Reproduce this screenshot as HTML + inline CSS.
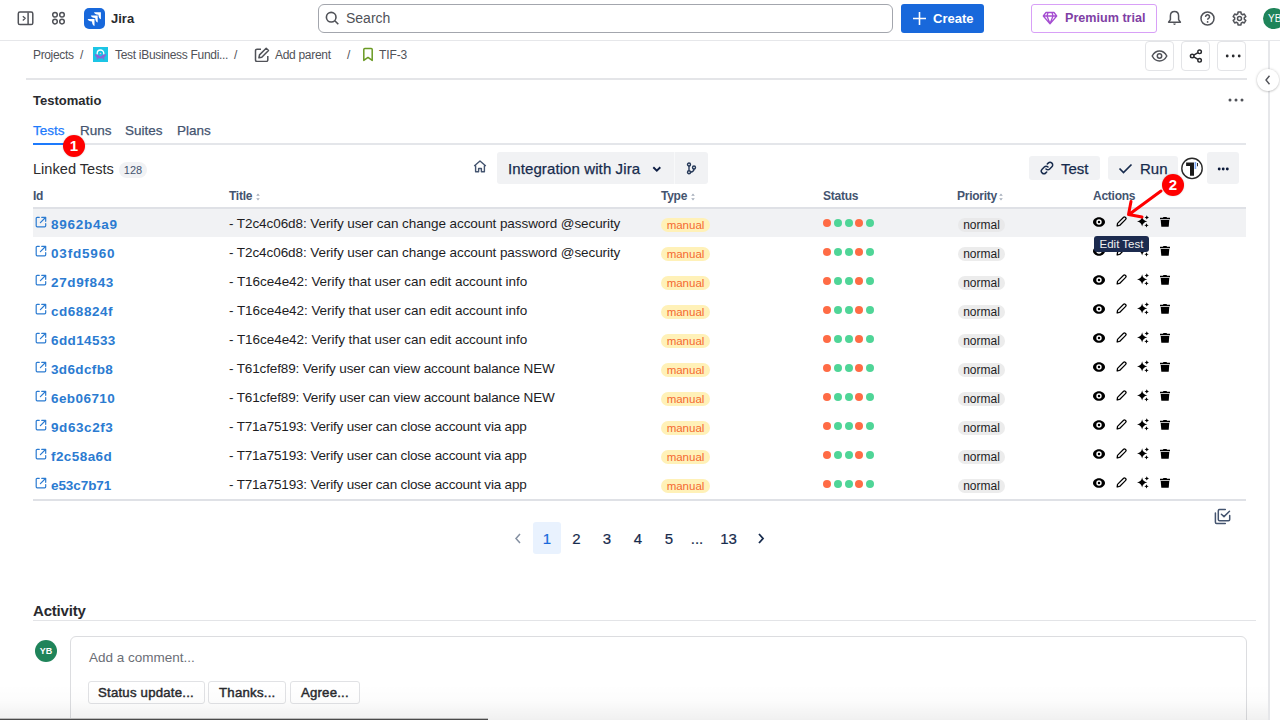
<!DOCTYPE html>
<html><head><meta charset="utf-8">
<style>
*{box-sizing:border-box;margin:0;padding:0}
html,body{width:1280px;height:720px;overflow:hidden;background:#fff;font-family:"Liberation Sans",sans-serif;color:#172b4d}
.a{position:absolute}
.hdr{position:absolute;left:0;top:0;width:1280px;height:41px;border-bottom:1px solid #e6e7ea}
.search{left:318px;top:3.5px;width:575px;height:29px;border:1px solid #a3a6ad;border-radius:6px}
.create{left:901px;top:3.5px;width:82.5px;height:29px;background:#1868db;border-radius:3px;color:#fff;font-weight:bold;font-size:14px}
.prem{left:1031px;top:3.5px;width:125.5px;height:29px;border:1px solid #d8a0f7;border-radius:3px;color:#803fa5;font-weight:bold;font-size:14px}
.bc{font-size:12px;color:#505258;letter-spacing:-0.1px}
.ibox{border:1px solid #e3e4e7;border-radius:4px;width:29px;height:30px;top:41px}
.row{position:absolute;left:33px;width:1213px;height:29px}
.idl{position:absolute;left:18px;font-weight:bold;font-size:13.5px;letter-spacing:.5px;color:#2b7bd1}
.ttl{position:absolute;left:196px;font-size:13.5px;letter-spacing:-0.1px;color:#1d1d1f}
.man{position:absolute;left:628px;width:49px;height:14px;border-radius:7px;background:#fff1b8;color:#f4692f;font-size:11.5px;text-align:center;line-height:14px}
.dots{position:absolute;left:790px;top:11px}
.dots i{position:absolute;top:0;width:8px;height:8px;border-radius:4px}
.nor{position:absolute;left:925px;width:47px;height:14px;border-radius:7px;background:#ececec;color:#1d1d1f;font-size:12px;text-align:center;line-height:14px}
.th{position:absolute;top:189px;font-size:12px;font-weight:bold;color:#44546f;letter-spacing:-0.25px}
</style></head><body>
<div class="hdr"></div>
<!-- top bar icons -->
<svg class="a" style="left:17px;top:11px" width="17" height="16" viewBox="0 0 17 16"><rect x="1.3" y="1.1" width="14.5" height="12.4" rx="1.6" fill="none" stroke="#505258" stroke-width="1.5"/><line x1="11.1" y1="1.5" x2="11.1" y2="13" stroke="#505258" stroke-width="1.5"/><path d="M5.8 5.2l2.4 2.1-2.4 2.1" fill="none" stroke="#505258" stroke-width="1.3" stroke-linejoin="round"/></svg>
<svg class="a" style="left:51px;top:11px" width="16" height="15" viewBox="0 0 16 15"><g fill="none" stroke="#505258" stroke-width="1.5"><circle cx="4" cy="3.8" r="2.3"/><circle cx="11" cy="3.8" r="2.3"/><circle cx="4" cy="10.6" r="2.3"/><circle cx="11" cy="10.6" r="2.3"/></g></svg>
<div class="a" style="left:84px;top:8px;width:21px;height:21px;background:#1868db;border-radius:5px"></div>
<svg class="a" style="left:84px;top:8px" width="21" height="21" viewBox="0 0 21 21"><g fill="#fff"><path d="M10 4.2H16.9V11.2Q14.6 10.6 14.4 6.8Q10.6 6.6 10 4.2Z"/><path d="M6.8 7.5H13.7V14.5Q11.4 13.9 11.2 10.1Q7.4 9.9 6.8 7.5Z"/><path d="M3.6 11H10.5V18Q8.2 17.4 8 13.6Q4.2 13.4 3.6 11Z"/></g></svg>
<div class="a" style="left:111px;top:11px;font-size:13px;font-weight:bold;color:#292a2e">Jira</div>
<div class="a search"></div>
<svg class="a" style="left:325px;top:11px" width="15" height="15" viewBox="0 0 15 15"><circle cx="6.2" cy="6.2" r="4.8" fill="none" stroke="#505258" stroke-width="1.6"/><path d="M9.8 9.8l3.5 3.5" stroke="#505258" stroke-width="1.6"/></svg>
<div class="a" style="left:346px;top:10px;font-size:14px;color:#505258">Search</div>
<div class="a create"></div>
<svg class="a" style="left:912px;top:11px" width="15" height="15" viewBox="0 0 15 15"><path d="M7.5 1v13M1 7.5h13" stroke="#fff" stroke-width="1.6"/></svg>
<div class="a" style="left:933px;top:11px;font-size:13px;font-weight:bold;color:#fff">Create</div>
<div class="a prem"></div>
<svg class="a" style="left:1042px;top:11px" width="16" height="14" viewBox="0 0 16 14"><path d="M4 1.5h8l2.7 3.5L8 12.8 1.3 5z M1.3 5h13.4 M6 1.5L5 5l3 7.8 3-7.8-1-3.5" fill="none" stroke="#a54ed1" stroke-width="1.3" stroke-linejoin="round"/></svg>
<div class="a" style="left:1065px;top:11px;font-size:12.6px;font-weight:bold;color:#803fa5">Premium trial</div>
<svg class="a" style="left:1167px;top:10px" width="15" height="16" viewBox="0 0 15 16"><path d="M7.5 1.6c-2.5 0-4.1 1.9-4.1 4.4v3.6L1.6 12.2h11.8L11.6 9.6V6c0-2.5-1.6-4.4-4.1-4.4z" fill="none" stroke="#505258" stroke-width="1.5" stroke-linejoin="round"/><path d="M6.2 13.6a1.3 1.3 0 002.6 0z" fill="#505258"/></svg>
<svg class="a" style="left:1199.5px;top:10.5px" width="15" height="15" viewBox="0 0 15 15"><circle cx="7.5" cy="7.5" r="6.5" fill="none" stroke="#505258" stroke-width="1.5"/><path d="M5.6 5.9a1.95 1.95 0 113.8.5c-.3.8-1.7 1-1.7 2.3" fill="none" stroke="#505258" stroke-width="1.5"/><circle cx="7.6" cy="10.9" r=".9" fill="#505258"/></svg>
<svg class="a" style="left:1232px;top:10.5px" width="15" height="15" viewBox="0 0 15 15"><path d="M6.02 1.07 L8.98 1.07 L9.18 2.90 L10.65 3.75 L12.33 3.00 L13.81 5.57 L12.33 6.65 L12.33 8.35 L13.81 9.43 L12.33 12.00 L10.65 11.25 L9.18 12.10 L8.98 13.93 L6.02 13.93 L5.82 12.10 L4.35 11.25 L2.67 12.00 L1.19 9.43 L2.67 8.35 L2.67 6.65 L1.19 5.57 L2.67 3.00 L4.35 3.75 L5.82 2.90Z" fill="none" stroke="#505258" stroke-width="1.5" stroke-linejoin="round"/><circle cx="7.5" cy="7.5" r="2" fill="none" stroke="#505258" stroke-width="1.5"/></svg>
<div class="a" style="left:1263px;top:8px;width:22px;height:21px;border-radius:11px;background:#1f845a;color:#fff;font-size:10px;line-height:21px;padding-left:5px">YB</div>

<!-- breadcrumbs -->
<div class="a bc" style="left:33px;top:48px;letter-spacing:-0.35px">Projects</div>
<div class="a bc" style="left:80px;top:48px">/</div>
<svg class="a" style="left:92.5px;top:47px" width="15" height="15" viewBox="0 0 15 15"><rect width="15" height="15" fill="#1cc5e5"/><path d="M4.2 7.5V6.3a3.3 3.3 0 016.6 0v1.2" fill="none" stroke="#fff" stroke-width="1.3"/><path d="M1.8 7Q7.5 9.3 13.2 7Q12.8 11.2 7.5 11.6Q2.2 11.2 1.8 7Z" fill="#8d63d6"/><path d="M4.3 11v1.4M10.7 11v1.4" stroke="#8d63d6" stroke-width="1.2"/><rect x="6" y="4.3" width="3" height="5" rx="1" fill="#17c3e4"/><circle cx="7.5" cy="6.5" r=".8" fill="#f4a9d9"/></svg>
<div class="a bc" style="left:115px;top:48px;letter-spacing:-0.3px">Test iBusiness Fundi...</div>
<div class="a bc" style="left:234px;top:48px">/</div>
<svg class="a" style="left:254px;top:47px" width="16" height="15" viewBox="0 0 16 15"><path d="M7 2.2H3a1.5 1.5 0 00-1.5 1.5v9.3A1.5 1.5 0 003 14.5h9.3a1.5 1.5 0 001.5-1.5V9" fill="none" stroke="#505258" stroke-width="1.5"/><path d="M12.2 1.2l2.3 2.3-6.7 6.7-2.9.6.6-2.9z" fill="none" stroke="#505258" stroke-width="1.5" stroke-linejoin="round"/></svg>
<div class="a bc" style="left:275px;top:48px;letter-spacing:-0.3px">Add parent</div>
<div class="a bc" style="left:347px;top:48px">/</div>
<svg class="a" style="left:362px;top:47px" width="12" height="15" viewBox="0 0 12 15"><path d="M2.8 1.5H9.2Q10.2 1.5 10.2 2.5V13.4L6 10.4 1.8 13.4V2.5Q1.8 1.5 2.8 1.5Z" fill="none" stroke="#6a9a23" stroke-width="1.5" stroke-linejoin="round"/></svg>
<div class="a bc" style="left:379px;top:48px">TIF-3</div>
<div class="a ibox" style="left:1145px"></div>
<div class="a ibox" style="left:1181px"></div>
<div class="a ibox" style="left:1217px"></div>
<svg class="a" style="left:1151px;top:49px" width="17" height="14" viewBox="0 0 17 14"><path d="M1.2 7C3 3.6 5.5 2 8.5 2s5.5 1.6 7.3 5c-1.8 3.4-4.3 5-7.3 5S3 10.4 1.2 7z" fill="none" stroke="#505258" stroke-width="1.5"/><circle cx="8.5" cy="7" r="2.2" fill="none" stroke="#505258" stroke-width="1.5"/></svg>
<svg class="a" style="left:1188px;top:48px" width="16" height="16" viewBox="0 0 16 16"><g fill="none" stroke="#292a2e" stroke-width="1.45"><circle cx="11.6" cy="3.8" r="1.8"/><circle cx="4.2" cy="8" r="1.8"/><circle cx="11.6" cy="12.3" r="1.8"/><path d="M5.8 7.1l4.2-2.4M5.8 8.9l4.2 2.4"/></g></svg>
<svg class="a" style="left:1224px;top:54px" width="18" height="4" viewBox="0 0 18 4"><circle cx="3.2" cy="2" r="1.4" fill="#292a2e"/><circle cx="9.2" cy="2" r="1.4" fill="#292a2e"/><circle cx="15.2" cy="2" r="1.4" fill="#292a2e"/></svg>

<!-- panel -->
<div class="a" style="left:26px;top:78px;width:1221px;height:2px;background:#e4e5e8"></div>
<div class="a" style="left:1268px;top:41px;width:2px;height:679px;background:#e6e7ea"></div>
<div class="a" style="left:1257px;top:69px;width:22px;height:22px;border-radius:11px;background:#fff;box-shadow:0 0 3px rgba(0,0,0,.18),0 1px 2px rgba(0,0,0,.12)"></div>
<svg class="a" style="left:1263px;top:74px" width="10" height="12" viewBox="0 0 10 12"><path d="M6.5 1.8L3 6l3.5 4.2" fill="none" stroke="#505258" stroke-width="1.4"/></svg>

<div class="a" style="left:33px;top:93px;font-size:13px;font-weight:bold;color:#292a2e">Testomatio</div>
<svg class="a" style="left:1228px;top:98px" width="16" height="4" viewBox="0 0 16 4"><circle cx="2" cy="2" r="1.5" fill="#505258"/><circle cx="8" cy="2" r="1.5" fill="#505258"/><circle cx="14" cy="2" r="1.5" fill="#505258"/></svg>

<div class="a" style="left:33px;top:143px;width:1213px;height:2px;background:#e4e6ea"></div>
<div class="a" style="left:33px;top:143px;width:33px;height:2px;background:#1d7afc"></div>
<div class="a" style="left:33px;top:123px;font-size:13.5px;color:#1d7afc;-webkit-text-stroke:.25px #1d7afc">Tests</div>
<div class="a" style="left:80px;top:123px;font-size:13.5px;color:#44546f;-webkit-text-stroke:.25px #44546f">Runs</div>
<div class="a" style="left:125px;top:123px;font-size:13.5px;color:#44546f;-webkit-text-stroke:.25px #44546f">Suites</div>
<div class="a" style="left:177px;top:123px;font-size:13.5px;color:#44546f;-webkit-text-stroke:.25px #44546f">Plans</div>

<div class="a" style="left:33px;top:161px;font-size:14.6px;color:#2c2c2e">Linked Tests</div>
<div class="a" style="left:119px;top:162px;width:28px;height:16px;border-radius:8px;background:#f1f2f4;color:#44546f;font-size:11px;text-align:center;line-height:16px">128</div>


<svg class="a" style="left:473px;top:160px" width="14" height="13" viewBox="0 0 14 13"><path d="M1.2 6L7 1l5.8 5 M2.6 4.8v7h3V8.5h2.8v3.3h3V4.8" fill="none" stroke="#44546f" stroke-width="1.4" stroke-linejoin="round"/></svg>
<div class="a" style="left:497px;top:152px;width:211px;height:32px;background:#f1f2f4;border-radius:3px"></div>
<div class="a" style="left:674px;top:152px;width:1px;height:32px;background:#f8f9fa"></div>
<div class="a" style="left:508px;top:160px;font-size:15px;color:#172b4d;letter-spacing:.1px;-webkit-text-stroke:.25px #172b4d">Integration with Jira</div>
<svg class="a" style="left:652px;top:166px" width="10" height="7" viewBox="0 0 10 7"><path d="M1.3 1.2L4.8 4.6 8.3 1.2" fill="none" stroke="#0f1f45" stroke-width="1.9"/></svg>
<svg class="a" style="left:686px;top:162px" width="11" height="13" viewBox="0 0 11 13"><g fill="none" stroke="#253858" stroke-width="1.4"><circle cx="3" cy="2.5" r="1.5"/><circle cx="3" cy="10.2" r="1.5"/><circle cx="8" cy="5.5" r="1.5"/><path d="M3 4v4.7 M8 7Q8 9.6 4.5 10.2"/></g></svg>
<div class="a" style="left:1029px;top:156px;width:71px;height:24px;background:#f1f2f4;border-radius:3px"></div>
<svg class="a" style="left:1040px;top:161px" width="14" height="14" viewBox="0 0 14 14"><g fill="none" stroke="#172b4d" stroke-width="1.5" stroke-linecap="round"><path d="M6 8a2.6 2.6 0 003.7 0l2.2-2.2a2.6 2.6 0 00-3.7-3.7L7.3 3"/><path d="M8 6a2.6 2.6 0 00-3.7 0L2.1 8.2a2.6 2.6 0 003.7 3.7l.9-.9"/></g></svg>
<div class="a" style="left:1061px;top:160px;font-size:15px;color:#172b4d;-webkit-text-stroke:.25px #172b4d">Test</div>
<div class="a" style="left:1108px;top:156px;width:70px;height:24px;background:#f1f2f4;border-radius:3px"></div>
<svg class="a" style="left:1118px;top:163px" width="15" height="11" viewBox="0 0 15 11"><path d="M1.5 5.5l4 4 8-8" fill="none" stroke="#172b4d" stroke-width="1.7"/></svg>
<div class="a" style="left:1140px;top:160px;font-size:15px;color:#172b4d;-webkit-text-stroke:.25px #172b4d">Run</div>
<svg class="a" style="left:1180px;top:157px" width="24" height="24" viewBox="0 0 24 24"><circle cx="12" cy="11.4" r="10.2" fill="#fff" stroke="#2a2a2a" stroke-width="1.4"/><path d="M6.1 5.5H14V18.8H10V9H6.1Z" fill="#1a1a1a"/><path d="M14.6 5H16.2V12H14.6Z" fill="#7ba8f7"/><path d="M17 6H18V9.2H17Z" fill="#333"/></svg>
<div class="a" style="left:1207px;top:152px;width:32px;height:32px;background:#f1f2f4;border-radius:3px"></div>
<svg class="a" style="left:1217px;top:167px" width="12" height="4" viewBox="0 0 12 4"><circle cx="2.2" cy="2" r="1.45" fill="#0c1a3a"/><circle cx="6.2" cy="2" r="1.45" fill="#0c1a3a"/><circle cx="10.3" cy="2" r="1.45" fill="#0c1a3a"/></svg>

<div class="th" style="left:33px">Id</div>
<div class="th" style="left:229px">Title</div>
<div class="th" style="left:661px">Type</div>
<div class="th" style="left:823px">Status</div>
<div class="th" style="left:957px">Priority</div>
<div class="th" style="left:1093px">Actions</div>
<svg class="a" style="left:256px;top:193px" width="4" height="8" viewBox="0 0 4 8"><path d="M2 0.5L3.8 2.8H0.2z M2 7.5L0.2 5.2h3.6z" fill="#a5adba"/></svg>
<svg class="a" style="left:691px;top:193px" width="4" height="8" viewBox="0 0 4 8"><path d="M2 0.5L3.8 2.8H0.2z M2 7.5L0.2 5.2h3.6z" fill="#a5adba"/></svg>
<svg class="a" style="left:999px;top:193px" width="4" height="8" viewBox="0 0 4 8"><path d="M2 0.5L3.8 2.8H0.2z M2 7.5L0.2 5.2h3.6z" fill="#a5adba"/></svg>
<div class="a" style="left:33px;top:207px;width:1213px;height:2px;background:#dfe1e6"></div>
<div class="a" style="left:33px;top:209px;width:1213px;height:28px;background:#f1f2f4"></div>
<div class="row" style="top:208px">
<svg class="a" style="left:2px;top:8px" width="12" height="12" viewBox="0 0 12 12"><path d="M4.3 1.3H2.2Q1.2 1.3 1.2 2.3V9.8Q1.2 10.8 2.2 10.8H9.7Q10.7 10.8 10.7 9.8V7.6" fill="none" stroke="#2b7bd1" stroke-width="1.2" stroke-linecap="round" stroke-linejoin="round"/><path d="M6.7 1.3h4v4 M10.5 1.5L5.4 6.6" fill="none" stroke="#2b7bd1" stroke-width="1.2" stroke-linecap="round" stroke-linejoin="round"/></svg>
<div class="idl" style="top:9px;letter-spacing:0.750px">8962b4a9</div>
<div class="ttl" style="top:8px;letter-spacing:-0.079px">- T2c4c06d8: Verify user can change account password @security</div>
<div class="man" style="top:10px">manual</div>
<div class="dots"><i style="left:0px;background:#ff6b45"></i><i style="left:11px;background:#4fd597"></i><i style="left:22px;background:#4fd597"></i><i style="left:32px;background:#ff6b45"></i><i style="left:43px;background:#4fd597"></i></div>
<div class="nor" style="top:10px;background:#e9e9ea">normal</div>
</div>
<svg class="a" style="left:1093px;top:216.5px" width="12" height="10" viewBox="0 0 12 10"><path d="M6 0.2C2.6 0.2 0 2.6 0 5S2.6 9.8 6 9.8 12 7.4 12 5 9.4 0.2 6 0.2Z" fill="#000"/><circle cx="6" cy="5" r="2.7" fill="#fff"/><circle cx="6" cy="5" r="1.25" fill="#000"/></svg>
<svg class="a" style="left:1116px;top:216.2px" width="11" height="11" viewBox="0 0 11 11"><path d="M1.2 9.8L1.5 7.4L7.6 1.3Q8.4 0.5 9.2 1.3L9.7 1.8Q10.5 2.6 9.7 3.4L3.6 9.5Z" fill="none" stroke="#000" stroke-width="1.25" stroke-linejoin="round"/><path d="M0.8 10.2L1.2 7.8L3.2 9.8Z" fill="#000"/></svg>
<svg class="a" style="left:1137px;top:215px" width="13" height="13" viewBox="0 -1.5 13 13"><path d="M5.1 -0.2Q5.6 4.2 10.3 4.9Q5.6 5.6 5.1 10Q4.6 5.6 -0.1 4.9Q4.6 4.2 5.1 -0.2Z" fill="#000"/><path d="M9.8 -1.2Q10.1 0.6 12 0.9Q10.1 1.2 9.8 3Q9.5 1.2 7.6 0.9Q9.5 0.6 9.8 -1.2Z" fill="#000"/><path d="M9.5 6.7Q9.8 8.5 11.7 8.8Q9.8 9.1 9.5 10.9Q9.2 9.1 7.3 8.8Q9.2 8.5 9.5 6.7Z" fill="#000"/></svg>
<svg class="a" style="left:1160px;top:216.5px" width="10" height="10" viewBox="0 0 10 10"><path d="M3.4 0H6.6L7 0.8H10V2.2H0V0.8H3Z" fill="#000"/><path d="M0.7 2.9H9.3L8.7 9.7H1.3Z" fill="#000"/></svg>
<div class="row" style="top:237px">
<svg class="a" style="left:2px;top:8px" width="12" height="12" viewBox="0 0 12 12"><path d="M4.3 1.3H2.2Q1.2 1.3 1.2 2.3V9.8Q1.2 10.8 2.2 10.8H9.7Q10.7 10.8 10.7 9.8V7.6" fill="none" stroke="#2b7bd1" stroke-width="1.2" stroke-linecap="round" stroke-linejoin="round"/><path d="M6.7 1.3h4v4 M10.5 1.5L5.4 6.6" fill="none" stroke="#2b7bd1" stroke-width="1.2" stroke-linecap="round" stroke-linejoin="round"/></svg>
<div class="idl" style="top:9px;letter-spacing:0.821px">03fd5960</div>
<div class="ttl" style="top:8px;letter-spacing:-0.079px">- T2c4c06d8: Verify user can change account password @security</div>
<div class="man" style="top:10px">manual</div>
<div class="dots"><i style="left:0px;background:#ff6b45"></i><i style="left:11px;background:#4fd597"></i><i style="left:22px;background:#4fd597"></i><i style="left:32px;background:#ff6b45"></i><i style="left:43px;background:#4fd597"></i></div>
<div class="nor" style="top:10px;background:#ececec">normal</div>
</div>
<svg class="a" style="left:1093px;top:245.5px" width="12" height="10" viewBox="0 0 12 10"><path d="M6 0.2C2.6 0.2 0 2.6 0 5S2.6 9.8 6 9.8 12 7.4 12 5 9.4 0.2 6 0.2Z" fill="#000"/><circle cx="6" cy="5" r="2.7" fill="#fff"/><circle cx="6" cy="5" r="1.25" fill="#000"/></svg>
<svg class="a" style="left:1116px;top:245.2px" width="11" height="11" viewBox="0 0 11 11"><path d="M1.2 9.8L1.5 7.4L7.6 1.3Q8.4 0.5 9.2 1.3L9.7 1.8Q10.5 2.6 9.7 3.4L3.6 9.5Z" fill="none" stroke="#000" stroke-width="1.25" stroke-linejoin="round"/><path d="M0.8 10.2L1.2 7.8L3.2 9.8Z" fill="#000"/></svg>
<svg class="a" style="left:1137px;top:244px" width="13" height="13" viewBox="0 -1.5 13 13"><path d="M5.1 -0.2Q5.6 4.2 10.3 4.9Q5.6 5.6 5.1 10Q4.6 5.6 -0.1 4.9Q4.6 4.2 5.1 -0.2Z" fill="#000"/><path d="M9.8 -1.2Q10.1 0.6 12 0.9Q10.1 1.2 9.8 3Q9.5 1.2 7.6 0.9Q9.5 0.6 9.8 -1.2Z" fill="#000"/><path d="M9.5 6.7Q9.8 8.5 11.7 8.8Q9.8 9.1 9.5 10.9Q9.2 9.1 7.3 8.8Q9.2 8.5 9.5 6.7Z" fill="#000"/></svg>
<svg class="a" style="left:1160px;top:245.5px" width="10" height="10" viewBox="0 0 10 10"><path d="M3.4 0H6.6L7 0.8H10V2.2H0V0.8H3Z" fill="#000"/><path d="M0.7 2.9H9.3L8.7 9.7H1.3Z" fill="#000"/></svg>
<div class="row" style="top:266px">
<svg class="a" style="left:2px;top:8px" width="12" height="12" viewBox="0 0 12 12"><path d="M4.3 1.3H2.2Q1.2 1.3 1.2 2.3V9.8Q1.2 10.8 2.2 10.8H9.7Q10.7 10.8 10.7 9.8V7.6" fill="none" stroke="#2b7bd1" stroke-width="1.2" stroke-linecap="round" stroke-linejoin="round"/><path d="M6.7 1.3h4v4 M10.5 1.5L5.4 6.6" fill="none" stroke="#2b7bd1" stroke-width="1.2" stroke-linecap="round" stroke-linejoin="round"/></svg>
<div class="idl" style="top:9px;letter-spacing:0.643px">27d9f843</div>
<div class="ttl" style="top:8px;letter-spacing:-0.050px">- T16ce4e42: Verify that user can edit account info</div>
<div class="man" style="top:10px">manual</div>
<div class="dots"><i style="left:0px;background:#ff6b45"></i><i style="left:11px;background:#4fd597"></i><i style="left:22px;background:#4fd597"></i><i style="left:32px;background:#ff6b45"></i><i style="left:43px;background:#4fd597"></i></div>
<div class="nor" style="top:10px;background:#ececec">normal</div>
</div>
<svg class="a" style="left:1093px;top:274.5px" width="12" height="10" viewBox="0 0 12 10"><path d="M6 0.2C2.6 0.2 0 2.6 0 5S2.6 9.8 6 9.8 12 7.4 12 5 9.4 0.2 6 0.2Z" fill="#000"/><circle cx="6" cy="5" r="2.7" fill="#fff"/><circle cx="6" cy="5" r="1.25" fill="#000"/></svg>
<svg class="a" style="left:1116px;top:274.2px" width="11" height="11" viewBox="0 0 11 11"><path d="M1.2 9.8L1.5 7.4L7.6 1.3Q8.4 0.5 9.2 1.3L9.7 1.8Q10.5 2.6 9.7 3.4L3.6 9.5Z" fill="none" stroke="#000" stroke-width="1.25" stroke-linejoin="round"/><path d="M0.8 10.2L1.2 7.8L3.2 9.8Z" fill="#000"/></svg>
<svg class="a" style="left:1137px;top:273px" width="13" height="13" viewBox="0 -1.5 13 13"><path d="M5.1 -0.2Q5.6 4.2 10.3 4.9Q5.6 5.6 5.1 10Q4.6 5.6 -0.1 4.9Q4.6 4.2 5.1 -0.2Z" fill="#000"/><path d="M9.8 -1.2Q10.1 0.6 12 0.9Q10.1 1.2 9.8 3Q9.5 1.2 7.6 0.9Q9.5 0.6 9.8 -1.2Z" fill="#000"/><path d="M9.5 6.7Q9.8 8.5 11.7 8.8Q9.8 9.1 9.5 10.9Q9.2 9.1 7.3 8.8Q9.2 8.5 9.5 6.7Z" fill="#000"/></svg>
<svg class="a" style="left:1160px;top:274.5px" width="10" height="10" viewBox="0 0 10 10"><path d="M3.4 0H6.6L7 0.8H10V2.2H0V0.8H3Z" fill="#000"/><path d="M0.7 2.9H9.3L8.7 9.7H1.3Z" fill="#000"/></svg>
<div class="row" style="top:295px">
<svg class="a" style="left:2px;top:8px" width="12" height="12" viewBox="0 0 12 12"><path d="M4.3 1.3H2.2Q1.2 1.3 1.2 2.3V9.8Q1.2 10.8 2.2 10.8H9.7Q10.7 10.8 10.7 9.8V7.6" fill="none" stroke="#2b7bd1" stroke-width="1.2" stroke-linecap="round" stroke-linejoin="round"/><path d="M6.7 1.3h4v4 M10.5 1.5L5.4 6.6" fill="none" stroke="#2b7bd1" stroke-width="1.2" stroke-linecap="round" stroke-linejoin="round"/></svg>
<div class="idl" style="top:9px;letter-spacing:0.536px">cd68824f</div>
<div class="ttl" style="top:8px;letter-spacing:-0.050px">- T16ce4e42: Verify that user can edit account info</div>
<div class="man" style="top:10px">manual</div>
<div class="dots"><i style="left:0px;background:#ff6b45"></i><i style="left:11px;background:#4fd597"></i><i style="left:22px;background:#4fd597"></i><i style="left:32px;background:#ff6b45"></i><i style="left:43px;background:#4fd597"></i></div>
<div class="nor" style="top:10px;background:#ececec">normal</div>
</div>
<svg class="a" style="left:1093px;top:303.5px" width="12" height="10" viewBox="0 0 12 10"><path d="M6 0.2C2.6 0.2 0 2.6 0 5S2.6 9.8 6 9.8 12 7.4 12 5 9.4 0.2 6 0.2Z" fill="#000"/><circle cx="6" cy="5" r="2.7" fill="#fff"/><circle cx="6" cy="5" r="1.25" fill="#000"/></svg>
<svg class="a" style="left:1116px;top:303.2px" width="11" height="11" viewBox="0 0 11 11"><path d="M1.2 9.8L1.5 7.4L7.6 1.3Q8.4 0.5 9.2 1.3L9.7 1.8Q10.5 2.6 9.7 3.4L3.6 9.5Z" fill="none" stroke="#000" stroke-width="1.25" stroke-linejoin="round"/><path d="M0.8 10.2L1.2 7.8L3.2 9.8Z" fill="#000"/></svg>
<svg class="a" style="left:1137px;top:302px" width="13" height="13" viewBox="0 -1.5 13 13"><path d="M5.1 -0.2Q5.6 4.2 10.3 4.9Q5.6 5.6 5.1 10Q4.6 5.6 -0.1 4.9Q4.6 4.2 5.1 -0.2Z" fill="#000"/><path d="M9.8 -1.2Q10.1 0.6 12 0.9Q10.1 1.2 9.8 3Q9.5 1.2 7.6 0.9Q9.5 0.6 9.8 -1.2Z" fill="#000"/><path d="M9.5 6.7Q9.8 8.5 11.7 8.8Q9.8 9.1 9.5 10.9Q9.2 9.1 7.3 8.8Q9.2 8.5 9.5 6.7Z" fill="#000"/></svg>
<svg class="a" style="left:1160px;top:303.5px" width="10" height="10" viewBox="0 0 10 10"><path d="M3.4 0H6.6L7 0.8H10V2.2H0V0.8H3Z" fill="#000"/><path d="M0.7 2.9H9.3L8.7 9.7H1.3Z" fill="#000"/></svg>
<div class="row" style="top:324px">
<svg class="a" style="left:2px;top:8px" width="12" height="12" viewBox="0 0 12 12"><path d="M4.3 1.3H2.2Q1.2 1.3 1.2 2.3V9.8Q1.2 10.8 2.2 10.8H9.7Q10.7 10.8 10.7 9.8V7.6" fill="none" stroke="#2b7bd1" stroke-width="1.2" stroke-linecap="round" stroke-linejoin="round"/><path d="M6.7 1.3h4v4 M10.5 1.5L5.4 6.6" fill="none" stroke="#2b7bd1" stroke-width="1.2" stroke-linecap="round" stroke-linejoin="round"/></svg>
<div class="idl" style="top:9px;letter-spacing:0.393px">6dd14533</div>
<div class="ttl" style="top:8px;letter-spacing:-0.050px">- T16ce4e42: Verify that user can edit account info</div>
<div class="man" style="top:10px">manual</div>
<div class="dots"><i style="left:0px;background:#ff6b45"></i><i style="left:11px;background:#4fd597"></i><i style="left:22px;background:#4fd597"></i><i style="left:32px;background:#ff6b45"></i><i style="left:43px;background:#4fd597"></i></div>
<div class="nor" style="top:10px;background:#ececec">normal</div>
</div>
<svg class="a" style="left:1093px;top:332.5px" width="12" height="10" viewBox="0 0 12 10"><path d="M6 0.2C2.6 0.2 0 2.6 0 5S2.6 9.8 6 9.8 12 7.4 12 5 9.4 0.2 6 0.2Z" fill="#000"/><circle cx="6" cy="5" r="2.7" fill="#fff"/><circle cx="6" cy="5" r="1.25" fill="#000"/></svg>
<svg class="a" style="left:1116px;top:332.2px" width="11" height="11" viewBox="0 0 11 11"><path d="M1.2 9.8L1.5 7.4L7.6 1.3Q8.4 0.5 9.2 1.3L9.7 1.8Q10.5 2.6 9.7 3.4L3.6 9.5Z" fill="none" stroke="#000" stroke-width="1.25" stroke-linejoin="round"/><path d="M0.8 10.2L1.2 7.8L3.2 9.8Z" fill="#000"/></svg>
<svg class="a" style="left:1137px;top:331px" width="13" height="13" viewBox="0 -1.5 13 13"><path d="M5.1 -0.2Q5.6 4.2 10.3 4.9Q5.6 5.6 5.1 10Q4.6 5.6 -0.1 4.9Q4.6 4.2 5.1 -0.2Z" fill="#000"/><path d="M9.8 -1.2Q10.1 0.6 12 0.9Q10.1 1.2 9.8 3Q9.5 1.2 7.6 0.9Q9.5 0.6 9.8 -1.2Z" fill="#000"/><path d="M9.5 6.7Q9.8 8.5 11.7 8.8Q9.8 9.1 9.5 10.9Q9.2 9.1 7.3 8.8Q9.2 8.5 9.5 6.7Z" fill="#000"/></svg>
<svg class="a" style="left:1160px;top:332.5px" width="10" height="10" viewBox="0 0 10 10"><path d="M3.4 0H6.6L7 0.8H10V2.2H0V0.8H3Z" fill="#000"/><path d="M0.7 2.9H9.3L8.7 9.7H1.3Z" fill="#000"/></svg>
<div class="row" style="top:353px">
<svg class="a" style="left:2px;top:8px" width="12" height="12" viewBox="0 0 12 12"><path d="M4.3 1.3H2.2Q1.2 1.3 1.2 2.3V9.8Q1.2 10.8 2.2 10.8H9.7Q10.7 10.8 10.7 9.8V7.6" fill="none" stroke="#2b7bd1" stroke-width="1.2" stroke-linecap="round" stroke-linejoin="round"/><path d="M6.7 1.3h4v4 M10.5 1.5L5.4 6.6" fill="none" stroke="#2b7bd1" stroke-width="1.2" stroke-linecap="round" stroke-linejoin="round"/></svg>
<div class="idl" style="top:9px;letter-spacing:0.357px">3d6dcfb8</div>
<div class="ttl" style="top:8px;letter-spacing:-0.138px">- T61cfef89: Verify user can view account balance NEW</div>
<div class="man" style="top:10px">manual</div>
<div class="dots"><i style="left:0px;background:#ff6b45"></i><i style="left:11px;background:#4fd597"></i><i style="left:22px;background:#4fd597"></i><i style="left:32px;background:#ff6b45"></i><i style="left:43px;background:#4fd597"></i></div>
<div class="nor" style="top:10px;background:#ececec">normal</div>
</div>
<svg class="a" style="left:1093px;top:361.5px" width="12" height="10" viewBox="0 0 12 10"><path d="M6 0.2C2.6 0.2 0 2.6 0 5S2.6 9.8 6 9.8 12 7.4 12 5 9.4 0.2 6 0.2Z" fill="#000"/><circle cx="6" cy="5" r="2.7" fill="#fff"/><circle cx="6" cy="5" r="1.25" fill="#000"/></svg>
<svg class="a" style="left:1116px;top:361.2px" width="11" height="11" viewBox="0 0 11 11"><path d="M1.2 9.8L1.5 7.4L7.6 1.3Q8.4 0.5 9.2 1.3L9.7 1.8Q10.5 2.6 9.7 3.4L3.6 9.5Z" fill="none" stroke="#000" stroke-width="1.25" stroke-linejoin="round"/><path d="M0.8 10.2L1.2 7.8L3.2 9.8Z" fill="#000"/></svg>
<svg class="a" style="left:1137px;top:360px" width="13" height="13" viewBox="0 -1.5 13 13"><path d="M5.1 -0.2Q5.6 4.2 10.3 4.9Q5.6 5.6 5.1 10Q4.6 5.6 -0.1 4.9Q4.6 4.2 5.1 -0.2Z" fill="#000"/><path d="M9.8 -1.2Q10.1 0.6 12 0.9Q10.1 1.2 9.8 3Q9.5 1.2 7.6 0.9Q9.5 0.6 9.8 -1.2Z" fill="#000"/><path d="M9.5 6.7Q9.8 8.5 11.7 8.8Q9.8 9.1 9.5 10.9Q9.2 9.1 7.3 8.8Q9.2 8.5 9.5 6.7Z" fill="#000"/></svg>
<svg class="a" style="left:1160px;top:361.5px" width="10" height="10" viewBox="0 0 10 10"><path d="M3.4 0H6.6L7 0.8H10V2.2H0V0.8H3Z" fill="#000"/><path d="M0.7 2.9H9.3L8.7 9.7H1.3Z" fill="#000"/></svg>
<div class="row" style="top:382px">
<svg class="a" style="left:2px;top:8px" width="12" height="12" viewBox="0 0 12 12"><path d="M4.3 1.3H2.2Q1.2 1.3 1.2 2.3V9.8Q1.2 10.8 2.2 10.8H9.7Q10.7 10.8 10.7 9.8V7.6" fill="none" stroke="#2b7bd1" stroke-width="1.2" stroke-linecap="round" stroke-linejoin="round"/><path d="M6.7 1.3h4v4 M10.5 1.5L5.4 6.6" fill="none" stroke="#2b7bd1" stroke-width="1.2" stroke-linecap="round" stroke-linejoin="round"/></svg>
<div class="idl" style="top:9px;letter-spacing:0.429px">6eb06710</div>
<div class="ttl" style="top:8px;letter-spacing:-0.138px">- T61cfef89: Verify user can view account balance NEW</div>
<div class="man" style="top:10px">manual</div>
<div class="dots"><i style="left:0px;background:#ff6b45"></i><i style="left:11px;background:#4fd597"></i><i style="left:22px;background:#4fd597"></i><i style="left:32px;background:#ff6b45"></i><i style="left:43px;background:#4fd597"></i></div>
<div class="nor" style="top:10px;background:#ececec">normal</div>
</div>
<svg class="a" style="left:1093px;top:390.5px" width="12" height="10" viewBox="0 0 12 10"><path d="M6 0.2C2.6 0.2 0 2.6 0 5S2.6 9.8 6 9.8 12 7.4 12 5 9.4 0.2 6 0.2Z" fill="#000"/><circle cx="6" cy="5" r="2.7" fill="#fff"/><circle cx="6" cy="5" r="1.25" fill="#000"/></svg>
<svg class="a" style="left:1116px;top:390.2px" width="11" height="11" viewBox="0 0 11 11"><path d="M1.2 9.8L1.5 7.4L7.6 1.3Q8.4 0.5 9.2 1.3L9.7 1.8Q10.5 2.6 9.7 3.4L3.6 9.5Z" fill="none" stroke="#000" stroke-width="1.25" stroke-linejoin="round"/><path d="M0.8 10.2L1.2 7.8L3.2 9.8Z" fill="#000"/></svg>
<svg class="a" style="left:1137px;top:389px" width="13" height="13" viewBox="0 -1.5 13 13"><path d="M5.1 -0.2Q5.6 4.2 10.3 4.9Q5.6 5.6 5.1 10Q4.6 5.6 -0.1 4.9Q4.6 4.2 5.1 -0.2Z" fill="#000"/><path d="M9.8 -1.2Q10.1 0.6 12 0.9Q10.1 1.2 9.8 3Q9.5 1.2 7.6 0.9Q9.5 0.6 9.8 -1.2Z" fill="#000"/><path d="M9.5 6.7Q9.8 8.5 11.7 8.8Q9.8 9.1 9.5 10.9Q9.2 9.1 7.3 8.8Q9.2 8.5 9.5 6.7Z" fill="#000"/></svg>
<svg class="a" style="left:1160px;top:390.5px" width="10" height="10" viewBox="0 0 10 10"><path d="M3.4 0H6.6L7 0.8H10V2.2H0V0.8H3Z" fill="#000"/><path d="M0.7 2.9H9.3L8.7 9.7H1.3Z" fill="#000"/></svg>
<div class="row" style="top:411px">
<svg class="a" style="left:2px;top:8px" width="12" height="12" viewBox="0 0 12 12"><path d="M4.3 1.3H2.2Q1.2 1.3 1.2 2.3V9.8Q1.2 10.8 2.2 10.8H9.7Q10.7 10.8 10.7 9.8V7.6" fill="none" stroke="#2b7bd1" stroke-width="1.2" stroke-linecap="round" stroke-linejoin="round"/><path d="M6.7 1.3h4v4 M10.5 1.5L5.4 6.6" fill="none" stroke="#2b7bd1" stroke-width="1.2" stroke-linecap="round" stroke-linejoin="round"/></svg>
<div class="idl" style="top:9px;letter-spacing:0.571px">9d63c2f3</div>
<div class="ttl" style="top:8px;letter-spacing:-0.182px">- T71a75193: Verify user can close account via app</div>
<div class="man" style="top:10px">manual</div>
<div class="dots"><i style="left:0px;background:#ff6b45"></i><i style="left:11px;background:#4fd597"></i><i style="left:22px;background:#4fd597"></i><i style="left:32px;background:#ff6b45"></i><i style="left:43px;background:#4fd597"></i></div>
<div class="nor" style="top:10px;background:#ececec">normal</div>
</div>
<svg class="a" style="left:1093px;top:419.5px" width="12" height="10" viewBox="0 0 12 10"><path d="M6 0.2C2.6 0.2 0 2.6 0 5S2.6 9.8 6 9.8 12 7.4 12 5 9.4 0.2 6 0.2Z" fill="#000"/><circle cx="6" cy="5" r="2.7" fill="#fff"/><circle cx="6" cy="5" r="1.25" fill="#000"/></svg>
<svg class="a" style="left:1116px;top:419.2px" width="11" height="11" viewBox="0 0 11 11"><path d="M1.2 9.8L1.5 7.4L7.6 1.3Q8.4 0.5 9.2 1.3L9.7 1.8Q10.5 2.6 9.7 3.4L3.6 9.5Z" fill="none" stroke="#000" stroke-width="1.25" stroke-linejoin="round"/><path d="M0.8 10.2L1.2 7.8L3.2 9.8Z" fill="#000"/></svg>
<svg class="a" style="left:1137px;top:418px" width="13" height="13" viewBox="0 -1.5 13 13"><path d="M5.1 -0.2Q5.6 4.2 10.3 4.9Q5.6 5.6 5.1 10Q4.6 5.6 -0.1 4.9Q4.6 4.2 5.1 -0.2Z" fill="#000"/><path d="M9.8 -1.2Q10.1 0.6 12 0.9Q10.1 1.2 9.8 3Q9.5 1.2 7.6 0.9Q9.5 0.6 9.8 -1.2Z" fill="#000"/><path d="M9.5 6.7Q9.8 8.5 11.7 8.8Q9.8 9.1 9.5 10.9Q9.2 9.1 7.3 8.8Q9.2 8.5 9.5 6.7Z" fill="#000"/></svg>
<svg class="a" style="left:1160px;top:419.5px" width="10" height="10" viewBox="0 0 10 10"><path d="M3.4 0H6.6L7 0.8H10V2.2H0V0.8H3Z" fill="#000"/><path d="M0.7 2.9H9.3L8.7 9.7H1.3Z" fill="#000"/></svg>
<div class="row" style="top:440px">
<svg class="a" style="left:2px;top:8px" width="12" height="12" viewBox="0 0 12 12"><path d="M4.3 1.3H2.2Q1.2 1.3 1.2 2.3V9.8Q1.2 10.8 2.2 10.8H9.7Q10.7 10.8 10.7 9.8V7.6" fill="none" stroke="#2b7bd1" stroke-width="1.2" stroke-linecap="round" stroke-linejoin="round"/><path d="M6.7 1.3h4v4 M10.5 1.5L5.4 6.6" fill="none" stroke="#2b7bd1" stroke-width="1.2" stroke-linecap="round" stroke-linejoin="round"/></svg>
<div class="idl" style="top:9px;letter-spacing:0.429px">f2c58a6d</div>
<div class="ttl" style="top:8px;letter-spacing:-0.182px">- T71a75193: Verify user can close account via app</div>
<div class="man" style="top:10px">manual</div>
<div class="dots"><i style="left:0px;background:#ff6b45"></i><i style="left:11px;background:#4fd597"></i><i style="left:22px;background:#4fd597"></i><i style="left:32px;background:#ff6b45"></i><i style="left:43px;background:#4fd597"></i></div>
<div class="nor" style="top:10px;background:#ececec">normal</div>
</div>
<svg class="a" style="left:1093px;top:448.5px" width="12" height="10" viewBox="0 0 12 10"><path d="M6 0.2C2.6 0.2 0 2.6 0 5S2.6 9.8 6 9.8 12 7.4 12 5 9.4 0.2 6 0.2Z" fill="#000"/><circle cx="6" cy="5" r="2.7" fill="#fff"/><circle cx="6" cy="5" r="1.25" fill="#000"/></svg>
<svg class="a" style="left:1116px;top:448.2px" width="11" height="11" viewBox="0 0 11 11"><path d="M1.2 9.8L1.5 7.4L7.6 1.3Q8.4 0.5 9.2 1.3L9.7 1.8Q10.5 2.6 9.7 3.4L3.6 9.5Z" fill="none" stroke="#000" stroke-width="1.25" stroke-linejoin="round"/><path d="M0.8 10.2L1.2 7.8L3.2 9.8Z" fill="#000"/></svg>
<svg class="a" style="left:1137px;top:447px" width="13" height="13" viewBox="0 -1.5 13 13"><path d="M5.1 -0.2Q5.6 4.2 10.3 4.9Q5.6 5.6 5.1 10Q4.6 5.6 -0.1 4.9Q4.6 4.2 5.1 -0.2Z" fill="#000"/><path d="M9.8 -1.2Q10.1 0.6 12 0.9Q10.1 1.2 9.8 3Q9.5 1.2 7.6 0.9Q9.5 0.6 9.8 -1.2Z" fill="#000"/><path d="M9.5 6.7Q9.8 8.5 11.7 8.8Q9.8 9.1 9.5 10.9Q9.2 9.1 7.3 8.8Q9.2 8.5 9.5 6.7Z" fill="#000"/></svg>
<svg class="a" style="left:1160px;top:448.5px" width="10" height="10" viewBox="0 0 10 10"><path d="M3.4 0H6.6L7 0.8H10V2.2H0V0.8H3Z" fill="#000"/><path d="M0.7 2.9H9.3L8.7 9.7H1.3Z" fill="#000"/></svg>
<div class="row" style="top:469px">
<svg class="a" style="left:2px;top:8px" width="12" height="12" viewBox="0 0 12 12"><path d="M4.3 1.3H2.2Q1.2 1.3 1.2 2.3V9.8Q1.2 10.8 2.2 10.8H9.7Q10.7 10.8 10.7 9.8V7.6" fill="none" stroke="#2b7bd1" stroke-width="1.2" stroke-linecap="round" stroke-linejoin="round"/><path d="M6.7 1.3h4v4 M10.5 1.5L5.4 6.6" fill="none" stroke="#2b7bd1" stroke-width="1.2" stroke-linecap="round" stroke-linejoin="round"/></svg>
<div class="idl" style="top:9px;letter-spacing:-0.071px">e53c7b71</div>
<div class="ttl" style="top:8px;letter-spacing:-0.182px">- T71a75193: Verify user can close account via app</div>
<div class="man" style="top:10px">manual</div>
<div class="dots"><i style="left:0px;background:#ff6b45"></i><i style="left:11px;background:#4fd597"></i><i style="left:22px;background:#4fd597"></i><i style="left:32px;background:#ff6b45"></i><i style="left:43px;background:#4fd597"></i></div>
<div class="nor" style="top:10px;background:#ececec">normal</div>
</div>
<svg class="a" style="left:1093px;top:477.5px" width="12" height="10" viewBox="0 0 12 10"><path d="M6 0.2C2.6 0.2 0 2.6 0 5S2.6 9.8 6 9.8 12 7.4 12 5 9.4 0.2 6 0.2Z" fill="#000"/><circle cx="6" cy="5" r="2.7" fill="#fff"/><circle cx="6" cy="5" r="1.25" fill="#000"/></svg>
<svg class="a" style="left:1116px;top:477.2px" width="11" height="11" viewBox="0 0 11 11"><path d="M1.2 9.8L1.5 7.4L7.6 1.3Q8.4 0.5 9.2 1.3L9.7 1.8Q10.5 2.6 9.7 3.4L3.6 9.5Z" fill="none" stroke="#000" stroke-width="1.25" stroke-linejoin="round"/><path d="M0.8 10.2L1.2 7.8L3.2 9.8Z" fill="#000"/></svg>
<svg class="a" style="left:1137px;top:476px" width="13" height="13" viewBox="0 -1.5 13 13"><path d="M5.1 -0.2Q5.6 4.2 10.3 4.9Q5.6 5.6 5.1 10Q4.6 5.6 -0.1 4.9Q4.6 4.2 5.1 -0.2Z" fill="#000"/><path d="M9.8 -1.2Q10.1 0.6 12 0.9Q10.1 1.2 9.8 3Q9.5 1.2 7.6 0.9Q9.5 0.6 9.8 -1.2Z" fill="#000"/><path d="M9.5 6.7Q9.8 8.5 11.7 8.8Q9.8 9.1 9.5 10.9Q9.2 9.1 7.3 8.8Q9.2 8.5 9.5 6.7Z" fill="#000"/></svg>
<svg class="a" style="left:1160px;top:477.5px" width="10" height="10" viewBox="0 0 10 10"><path d="M3.4 0H6.6L7 0.8H10V2.2H0V0.8H3Z" fill="#000"/><path d="M0.7 2.9H9.3L8.7 9.7H1.3Z" fill="#000"/></svg>
<div class="a" style="left:33px;top:499px;width:1213px;height:2px;background:#dfe1e6"></div>
<div class="a" style="left:1094px;top:236px;width:55px;height:16px;background:#1c2b4f;border-radius:3px;color:#f0f0f0;font-size:11.5px;line-height:16px;text-align:center">Edit Test</div>
<svg class="a" style="left:1110px;top:180px" width="70" height="50" viewBox="1110 180 70 50"><path d="M1161 191L1129 214.5 M1131 201.5L1128.5 214.5L1142 217" fill="none" stroke="#f00" stroke-width="3" stroke-linecap="round" stroke-linejoin="round"/></svg>
<div class="a" style="left:1162px;top:174px;width:22px;height:22px;border-radius:11px;background:#f00;color:#fff;font-weight:bold;font-size:15px;line-height:22px;text-align:center;box-shadow:0 0 2px rgba(0,0,0,.2)">2</div>
<div class="a" style="left:63px;top:135px;width:22px;height:22px;border-radius:11px;background:#f00;color:#fff;font-weight:bold;font-size:15px;line-height:22px;text-align:center;box-shadow:0 0 2px rgba(0,0,0,.2)">1</div>

<div class="a" style="left:533px;top:522px;width:28px;height:32px;background:#e9f2fe;border-radius:3px"></div>
<svg class="a" style="left:514px;top:533px" width="8" height="11" viewBox="0 0 8 11"><path d="M6 1L2 5.5 6 10" fill="none" stroke="#8590a2" stroke-width="1.5"/></svg>
<svg class="a" style="left:757px;top:533px" width="8" height="11" viewBox="0 0 8 11"><path d="M2 1l4 4.5L2 10" fill="none" stroke="#172b4d" stroke-width="1.8"/></svg>
<div class="a" style="left:527px;width:40px;top:530px;text-align:center;font-size:15px;color:#1868db;-webkit-text-stroke:.2px #1868db">1</div>
<div class="a" style="left:556.5px;width:40px;top:530px;text-align:center;font-size:15px;color:#172b4d;-webkit-text-stroke:.2px #172b4d">2</div>
<div class="a" style="left:587px;width:40px;top:530px;text-align:center;font-size:15px;color:#172b4d;-webkit-text-stroke:.2px #172b4d">3</div>
<div class="a" style="left:618px;width:40px;top:530px;text-align:center;font-size:15px;color:#172b4d;-webkit-text-stroke:.2px #172b4d">4</div>
<div class="a" style="left:649px;width:40px;top:530px;text-align:center;font-size:15px;color:#172b4d;-webkit-text-stroke:.2px #172b4d">5</div>
<div class="a" style="left:677px;width:40px;top:530px;text-align:center;font-size:15px;color:#172b4d;-webkit-text-stroke:.2px #172b4d">...</div>
<div class="a" style="left:708.5px;width:40px;top:530px;text-align:center;font-size:15px;color:#172b4d;-webkit-text-stroke:.2px #172b4d">13</div>
<svg class="a" style="left:1214px;top:508px" width="17" height="17" viewBox="0 0 17 17"><g fill="none" stroke="#44546f" stroke-width="1.5" stroke-linecap="round" stroke-linejoin="round"><path d="M11.3 1.6H5.5Q4.3 1.6 4.3 2.8V11.5Q4.3 12.7 5.5 12.7H14.5Q15.7 12.7 15.7 11.5V7.6"/><path d="M7.4 6.2L10 8.6L15.5 3.2"/><path d="M1.4 5V14.3Q1.4 15.5 2.6 15.5H11.3"/></g></svg>

<div class="a" style="left:33px;top:602px;font-size:15px;font-weight:bold;color:#292a2e;letter-spacing:-0.2px">Activity</div>
<div class="a" style="left:33px;top:620px;width:1223px;height:1px;background:#e3e4e7"></div>
<div class="a" style="left:35px;top:640px;width:22px;height:22px;border-radius:11px;background:#1f845a;color:#fff;font-size:9px;font-weight:bold;line-height:22px;text-align:center">YB</div>
<div class="a" style="left:70px;top:636px;width:1177px;height:100px;border:1.5px solid #dcdde0;border-radius:6px"></div>
<div class="a" style="left:89px;top:650px;font-size:13.5px;color:#6b6e76">Add a comment...</div>
<div class="a" style="left:88px;top:681px;width:117px;height:23px;border:1px solid #e1e2e5;border-radius:3px"></div>
<div class="a" style="left:208px;top:681px;width:78px;height:23px;border:1px solid #e1e2e5;border-radius:3px"></div>
<div class="a" style="left:290px;top:681px;width:70px;height:23px;border:1px solid #e1e2e5;border-radius:3px"></div>
<div class="a" style="left:98px;top:685px;font-size:13.2px;color:#292a2e;-webkit-text-stroke:0.45px #292a2e;letter-spacing:0.22px">Status update...</div>
<div class="a" style="left:219px;top:685px;font-size:13.2px;color:#292a2e;-webkit-text-stroke:0.45px #292a2e;letter-spacing:0.25px">Thanks...</div>
<div class="a" style="left:301px;top:685px;font-size:13.2px;color:#292a2e;-webkit-text-stroke:0.45px #292a2e;letter-spacing:0.2px">Agree...</div>
<div class="a" style="left:0;top:684px;width:1268px;height:36px;background:linear-gradient(rgba(0,0,0,0) 0%,rgba(0,0,0,.012) 45%,rgba(0,0,0,.06) 100%)"></div>
<div class="a" style="left:0;top:718px;width:488px;height:2px;background:linear-gradient(#bbb 0 40%,#4a4a4a 40%)"></div>

</body></html>
